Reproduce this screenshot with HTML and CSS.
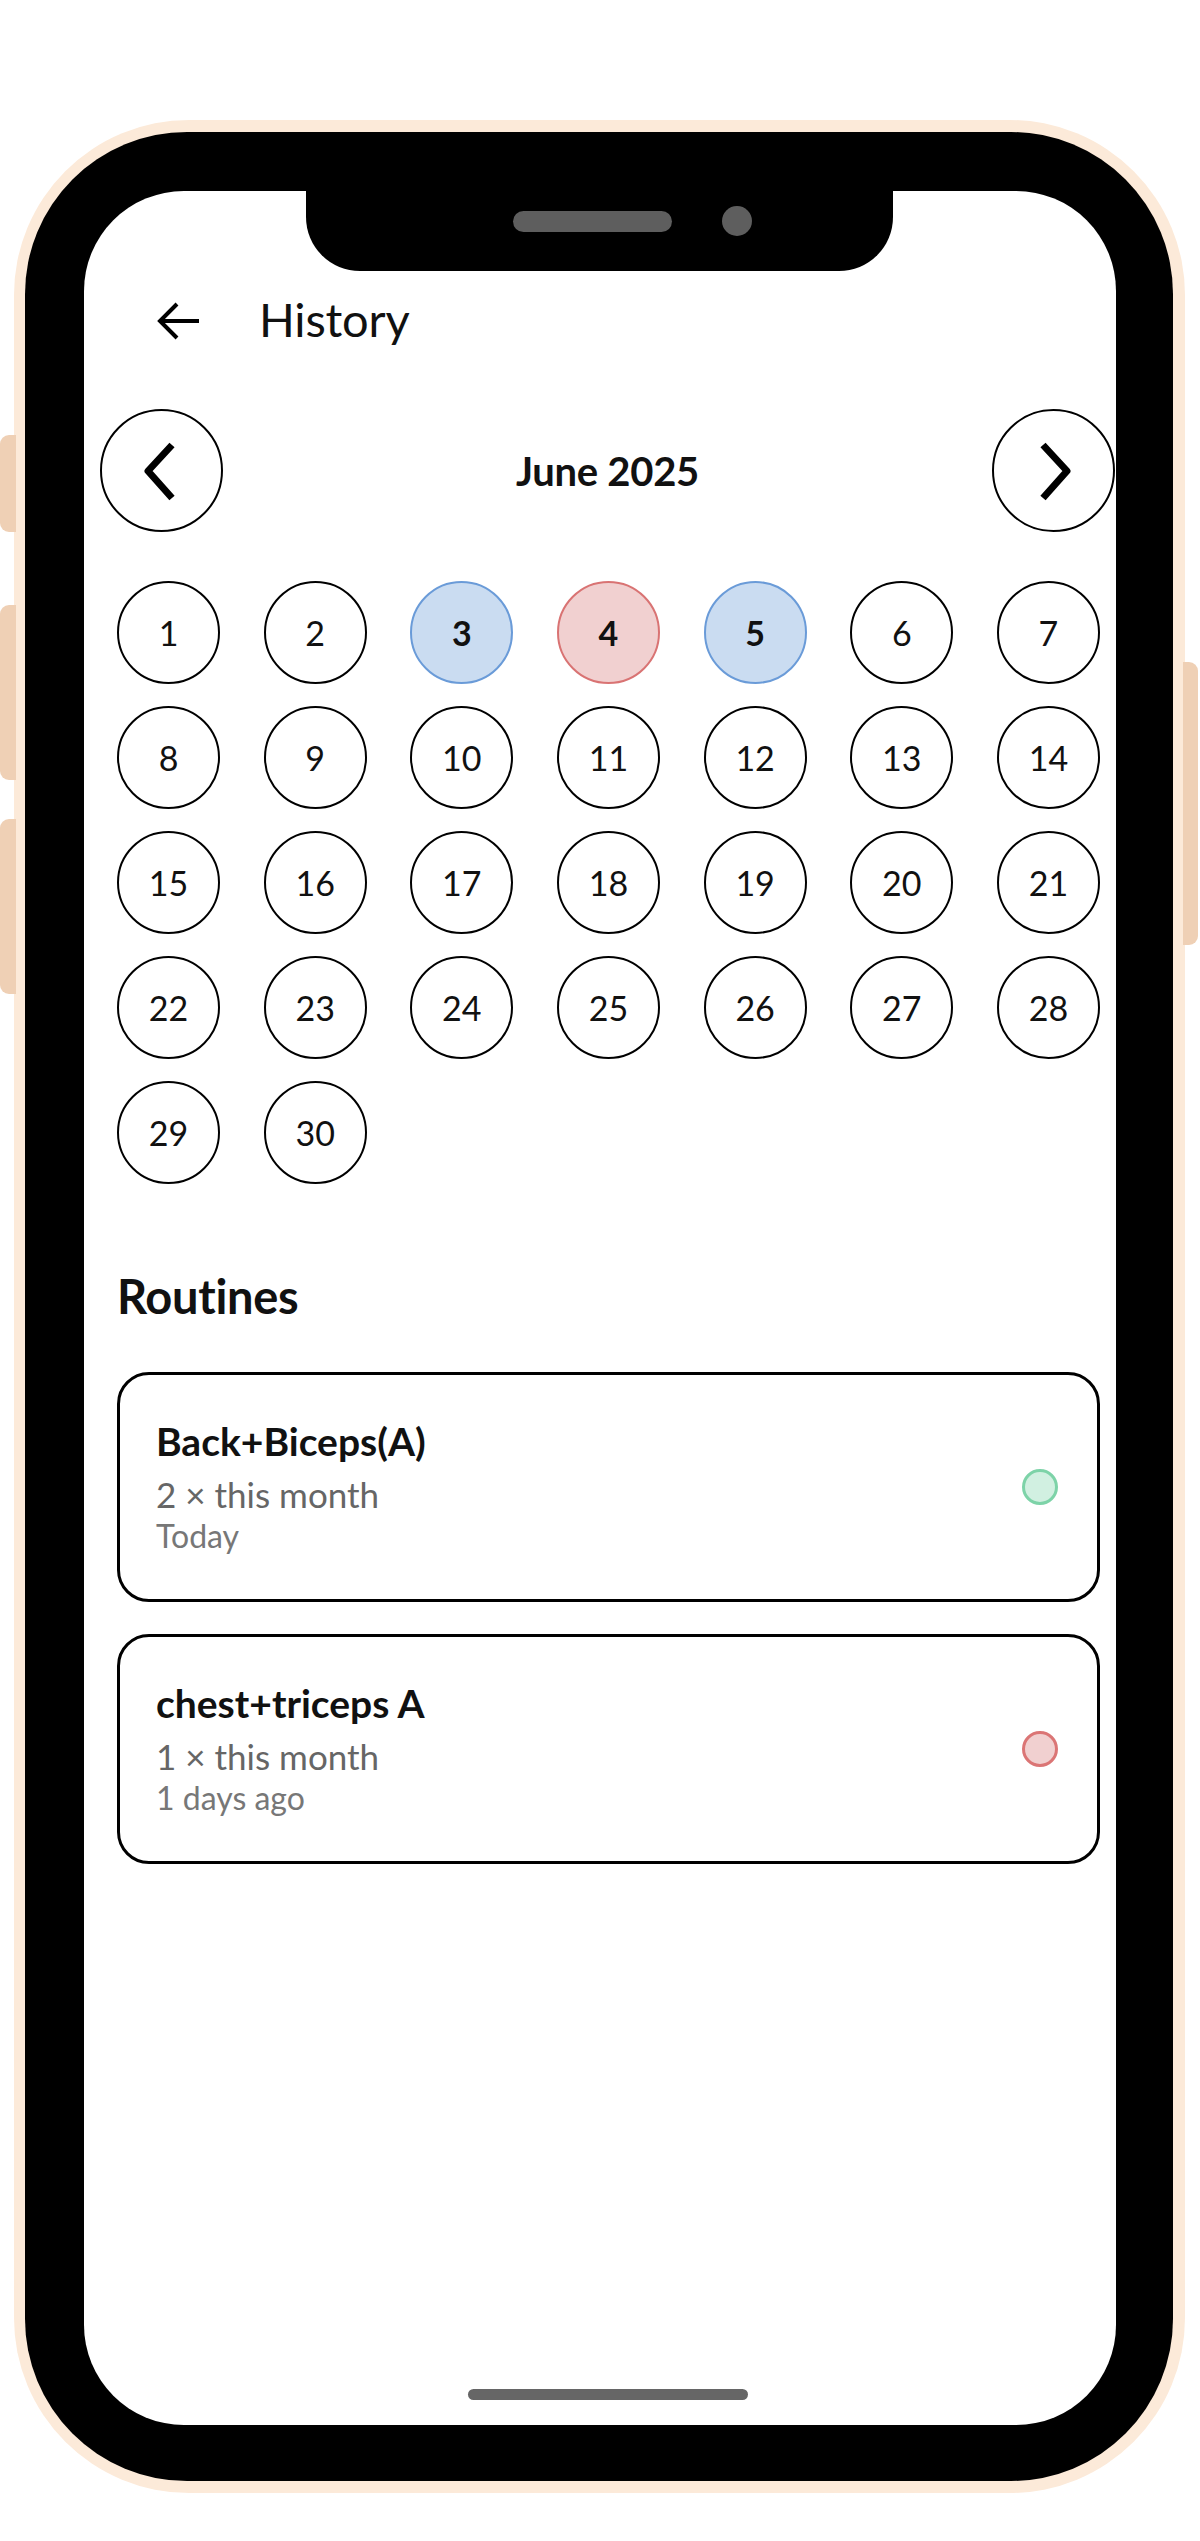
FILE: index.html
```html
<!DOCTYPE html>
<html lang="en">
<head>
<meta charset="utf-8">
<title>History</title>
<link rel="stylesheet" href="styles.css">
</head>
<body>
<div class="page">
  <div class="phone">
    <span class="side-btn left b1"></span>
    <span class="side-btn left b2"></span>
    <span class="side-btn left b3"></span>
    <span class="side-btn right b4"></span>
    <div class="bezel">
      <div class="screen">
        <div class="notch">
          <span class="speaker"></span>
          <span class="camera"></span>
        </div>

        <header class="app-header">
          <svg class="back-icon" width="44" height="40" viewBox="0 0 44 40" aria-hidden="true">
            <path d="M43 20 H4 M21 3 L4 20 L21 37" fill="none" stroke="#000" stroke-width="4" stroke-linecap="butt" stroke-linejoin="miter"/>
          </svg>
          <h1 class="app-title">History</h1>
        </header>

        <div class="month-nav">
          <button class="nav-btn" aria-label="Previous month">
            <svg width="40" height="60" viewBox="0 0 40 60" aria-hidden="true">
              <path d="M30 4 L6 30 L30 57" fill="none" stroke="#000" stroke-width="7" stroke-linejoin="round"/>
            </svg>
          </button>
          <div class="month-label">June 2025</div>
          <button class="nav-btn" aria-label="Next month">
            <svg width="40" height="60" viewBox="0 0 40 60" aria-hidden="true">
              <path d="M10 4 L34 30 L10 57" fill="none" stroke="#000" stroke-width="7" stroke-linejoin="round"/>
            </svg>
          </button>
        </div>

        <div class="cal-grid">
          <div class="day">1</div>
          <div class="day">2</div>
          <div class="day sel-blue">3</div>
          <div class="day sel-red">4</div>
          <div class="day sel-blue">5</div>
          <div class="day">6</div>
          <div class="day">7</div>
          <div class="day">8</div>
          <div class="day">9</div>
          <div class="day">10</div>
          <div class="day">11</div>
          <div class="day">12</div>
          <div class="day">13</div>
          <div class="day">14</div>
          <div class="day">15</div>
          <div class="day">16</div>
          <div class="day">17</div>
          <div class="day">18</div>
          <div class="day">19</div>
          <div class="day">20</div>
          <div class="day">21</div>
          <div class="day">22</div>
          <div class="day">23</div>
          <div class="day">24</div>
          <div class="day">25</div>
          <div class="day">26</div>
          <div class="day">27</div>
          <div class="day">28</div>
          <div class="day">29</div>
          <div class="day">30</div>
        </div>

        <h2 class="section-title">Routines</h2>

        <div class="routine-list">
          <div class="routine-card">
            <div class="routine-text">
              <div class="routine-name">Back+Biceps(A)</div>
              <div class="routine-count">2 × this month</div>
              <div class="routine-date">Today</div>
            </div>
            <span class="dot dot-green"></span>
          </div>
          <div class="routine-card">
            <div class="routine-text">
              <div class="routine-name">chest+triceps A</div>
              <div class="routine-count">1 × this month</div>
              <div class="routine-date">1 days ago</div>
            </div>
            <span class="dot dot-red"></span>
          </div>
        </div>

        <div class="home-indicator"></div>
      </div>
    </div>
  </div>
</div>
</body>
</html>
```

FILE: styles.css
```css
* {
  box-sizing: border-box;
}

html, body {
  margin: 0;
  padding: 0;
  background: #ffffff;
}

body {
  font-family: Lato, "Noto Sans", "Liberation Sans", sans-serif;
  color: #111;
}

.page {
  width: 1200px;
  height: 2541px;
  padding-top: 120px;
  padding-left: 14px;
  overflow: hidden;
}

.phone {
  position: relative;
  width: 1171px;
  height: 2373px;
  padding: 12px 12px 12px 11px;
  background: #fcead9;
  border-radius: 175px;
}

.side-btn {
  position: absolute;
  background: #efd0b5;
}

.side-btn.left {
  left: -14px;
  width: 16px;
  border-radius: 9px 0 0 9px;
}

.side-btn.right {
  right: -13px;
  width: 15px;
  border-radius: 0 9px 9px 0;
}

.b1 { top: 315px; height: 97px; }
.b2 { top: 485px; height: 175px; }
.b3 { top: 699px; height: 175px; }
.b4 { top: 542px; height: 283px; }

.bezel {
  width: 100%;
  height: 100%;
  background: #000;
  border-radius: 162px;
  padding: 59px 57px 56px 59px;
}

.screen {
  position: relative;
  height: 100%;
  background: #fff;
  border-radius: 100px;
  display: flex;
  flex-direction: column;
}

.notch {
  position: absolute;
  top: 0;
  left: 222px;
  width: 587px;
  height: 80px;
  background: #000;
  border-radius: 0 0 54px 54px;
  display: flex;
  align-items: center;
  align-self: flex-start;
  padding: 0 0 20px 207px;
  gap: 50px;
}

.speaker {
  width: 159px;
  height: 21px;
  border-radius: 11px;
  background: #5e5e5e;
}

.camera {
  width: 30px;
  height: 30px;
  border-radius: 50%;
  background: #5e5e5e;
}

.app-header {
  margin-top: 100px;
  height: 60px;
  padding-left: 72px;
  display: flex;
  align-items: center;
}

.back-icon {
  display: block;
  flex: none;
}

.app-title {
  margin: 0 0 0 59px;
  font-size: 47px;
  font-weight: 400;
  line-height: 60px;
  position: relative;
  top: -2px;
  letter-spacing: -0.2px;
}

.month-nav {
  margin-top: 58px;
  padding-left: 16px;
  padding-right: 1px;
  display: flex;
  align-items: center;
  justify-content: space-between;
}

.nav-btn {
  width: 123px;
  height: 123px;
  border-radius: 50%;
  border: 2px solid #000;
  background: #fff;
  padding: 0;
  margin: 0;
  display: flex;
  align-items: center;
  justify-content: center;
}

.nav-btn svg {
  display: block;
}

.month-label {
  font-size: 40px;
  font-weight: 700;
  line-height: 50px;
  letter-spacing: -0.3px;
}

.cal-grid {
  margin-top: 49px;
  margin-left: 33px;
  width: 983px;
  display: grid;
  grid-template-columns: repeat(7, 103px);
  justify-content: space-between;
  row-gap: 22px;
}

.day {
  width: 103px;
  height: 103px;
  border-radius: 50%;
  border: 2px solid #000;
  display: flex;
  align-items: center;
  justify-content: center;
  font-size: 34px;
  font-weight: 400;
  color: #111;
}

.day.sel-blue {
  background: #cadcf1;
  border-color: #6a9bd8;
  font-weight: 700;
}

.day.sel-red {
  background: #f1d0d0;
  border-color: #d97373;
  font-weight: 700;
}

.section-title {
  margin: 85px 0 0 33px;
  font-size: 47px;
  font-weight: 700;
  line-height: 54px;
  letter-spacing: -0.3px;
}

.routine-list {
  margin: 49px 0 0 33px;
  width: 983px;
  display: flex;
  flex-direction: column;
  gap: 32px;
}

.routine-card {
  height: 230px;
  border: 3px solid #000;
  border-radius: 32px;
  padding: 0 39px 0 36px;
  display: flex;
  align-items: center;
  justify-content: space-between;
}

.routine-text {
  display: flex;
  flex-direction: column;
}

.routine-name {
  font-size: 39px;
  font-weight: 700;
  line-height: 46px;
  color: #111;
}

.routine-count {
  margin-top: 8px;
  font-size: 35px;
  line-height: 44px;
  color: #666;
}

.routine-date {
  font-size: 32px;
  line-height: 40px;
  color: #777;
}

.dot {
  width: 36px;
  height: 36px;
  border-radius: 50%;
  border: 3px solid;
  flex: none;
}

.dot-green {
  background: #d1f0e1;
  border-color: #7dd3a8;
}

.dot-red {
  background: #f1d0d0;
  border-color: #db7575;
}

.home-indicator {
  margin: auto 0 25px 384px;
  width: 280px;
  height: 11px;
  border-radius: 6px;
  background: #666;
}
```
